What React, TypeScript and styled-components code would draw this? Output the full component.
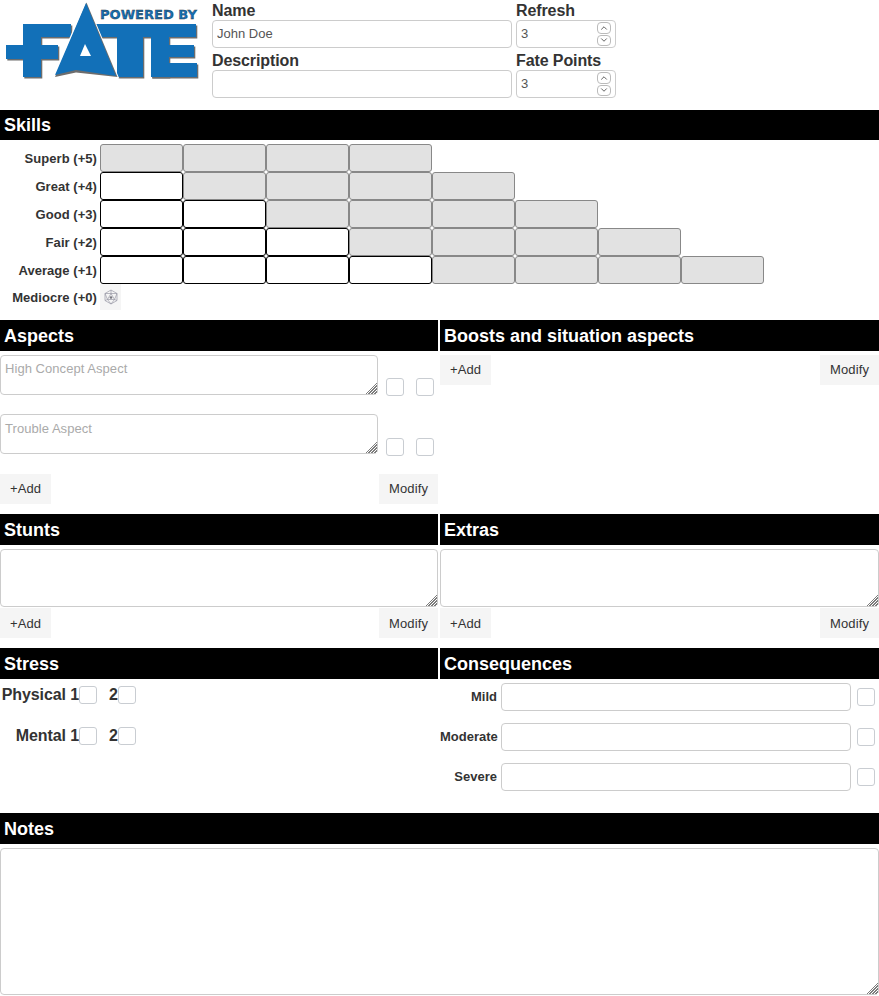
import React from 'react';
import styled, { createGlobalStyle } from 'styled-components';
import { ChevronUp, ChevronDown } from 'lucide-react';

const Global = createGlobalStyle`
  html, body {
    margin: 0;
    padding: 0;
    background: #fff;
  }
  body {
    font-family: "Liberation Sans", Arial, sans-serif;
    color: #333;
  }
  * {
    box-sizing: border-box;
  }
`;

const Page = styled.div`
  width: 879px;
  height: 996px;
  overflow: hidden;
`;

const Top = styled.div`
  display: flex;
  height: 110px;
`;

const LogoBox = styled.div`
  width: 212px;
  flex: none;
`;

const Fields = styled.div`
  display: grid;
  grid-template-columns: 300px 100px;
  column-gap: 4px;
  align-content: start;
`;

const Field = styled.label`
  display: block;
  height: 50px;
  padding-top: 1px;
  font-size: 16px;
  font-weight: bold;
  line-height: 19px;
  letter-spacing: -0.1px;
`;

const TextInput = styled.input`
  display: block;
  width: ${(p: { $w?: number }) => (p.$w ? `${p.$w}px` : '100%')};
  height: 28px;
  padding: 0 4px 2px;
  border: 1px solid #ccc;
  border-radius: 4px;
  background: #fff;
  font: 13px "Liberation Sans", Arial, sans-serif;
  color: #555;
  outline: none;
`;

const NumberBox = styled.div`
  display: flex;
  align-items: center;
  justify-content: space-between;
  height: 28px;
  padding: 0 4px;
  border: 1px solid #ccc;
  border-radius: 4px;
  font-size: 13px;
  font-weight: normal;
  letter-spacing: 0;
  color: #555;
`;

const NumberValue = styled.span`
  padding-bottom: 2px;
`;

const Spin = styled.div`
  display: flex;
  flex-direction: column;
  gap: 1px;
`;

const SpinButton = styled.div`
  display: flex;
  align-items: center;
  justify-content: center;
  width: 14px;
  height: 11.5px;
  border: 1px solid #bbb;
  border-radius: 4px;
  color: #444;
`;

const Header = styled.div<{ $h?: number }>`
  height: ${(p) => p.$h ?? 31}px;
  padding-left: 4px;
  background: #000;
  color: #fff;
  font-size: 18px;
  font-weight: bold;
  line-height: ${(p) => (p.$h ? p.$h : 32)}px;
`;

const Skills = styled.div`
  padding: 4px 0 8px;
`;

const SkillRow = styled.div`
  display: flex;
  height: 28px;
`;

const SkillLabel = styled.div`
  width: 97px;
  margin-right: 3px;
  text-align: right;
  font-size: 13px;
  font-weight: bold;
  line-height: 29px;
  letter-spacing: 0.05px;
`;

const MediocreLabel = styled(SkillLabel)`
  line-height: 27px;
`;

const Cell = styled.div<{ $filled?: boolean }>`
  width: 83px;
  height: 28px;
  border: 1px solid ${(p) => (p.$filled ? '#000' : '#888')};
  border-radius: 3px;
  background: ${(p) => (p.$filled ? '#fff' : '#e2e2e2')};
`;

const DiceButton = styled.div`
  display: flex;
  align-items: center;
  justify-content: center;
  width: 21px;
  height: 26px;
  background: #f5f5f5;
`;

const Columns = styled.div`
  display: grid;
  grid-template-columns: 438px 439px;
  column-gap: 2px;
`;

const AspectBlock = styled.div`
  height: 163px;
  padding-top: 4px;
`;

const Area = styled.textarea<{ $w?: number; $h: number }>`
  display: block;
  flex: none;
  width: ${(p) => (p.$w ? `${p.$w}px` : '100%')};
  height: ${(p) => p.$h}px;
  margin: 0;
  padding: 5px 4px 4px;
  border: 1px solid #ccc;
  border-radius: 4px;
  background: #fff;
  font: 13px "Liberation Sans", Arial, sans-serif;
  color: #555;
  outline: none;

  &::placeholder {
    color: #aaa;
    opacity: 1;
    letter-spacing: 0.05px;
  }

  &::-webkit-resizer {
    background-color: #fff;
    background-image: linear-gradient(135deg, #fff 62%, transparent 62%),
      repeating-linear-gradient(135deg, #7d7d7d 0 1px, #fff 1px 2.12px);
  }
`;

const Checks = styled.div`
  display: flex;
  gap: 12px;
  margin-left: 8px;
  margin-bottom: -1px;
`;

const AspectRow = styled.div`
  display: flex;
  align-items: flex-end;
  margin-bottom: 19px;

  & + & {
    margin-bottom: 20px;
  }

  & + & ${Area} {
    padding-top: 6px;
  }

  & + & ${Checks} {
    margin-bottom: -2px;
  }
`;

const Check = styled.input.attrs({ type: 'checkbox' })`
  appearance: none;
  display: block;
  flex: none;
  width: 18px;
  height: 18px;
  margin: 0;
  border: 1px solid #c9cdd2;
  border-radius: 3px;
  background: #fff;
`;

const Actions = styled.div`
  display: flex;
  justify-content: space-between;
`;

const Button = styled.button`
  height: 30px;
  padding: 0 10px 2px;
  border: 0;
  background: #f5f5f5;
  font: 13px "Liberation Sans", Arial, sans-serif;
  letter-spacing: 0.1px;
  color: #333;
`;

const TextBlock = styled.div`
  height: 103px;
  padding-top: 4px;
`;

const ActionsTight = styled(Actions)`
  margin-top: 1px;

  ${Button} {
    padding-bottom: 0;
  }
`;

const StressBlock = styled.div`
  height: 134px;
  padding-top: 7px;
`;

const StressRow = styled.div`
  display: flex;
  align-items: center;
  height: 18px;
  margin-bottom: 23px;
  font-size: 16px;
  font-weight: bold;
  letter-spacing: -0.1px;
`;

const StressName = styled.div`
  width: 79px;
  text-align: right;
  white-space: nowrap;
`;

const StressTwo = styled.div`
  width: 9px;
  margin-left: 12px;
`;

const ConsequenceBlock = styled.div`
  padding-top: 4px;
`;

const ConsequenceRow = styled.div`
  display: flex;
  align-items: center;
  height: 28px;
  margin-bottom: 12px;
`;

const ConsequenceLabel = styled.div`
  width: 57px;
  margin-right: 4px;
  padding-bottom: 2px;
  text-align: right;
  font-size: 13px;
  font-weight: bold;
`;

const ConsequenceCheck = styled(Check)`
  margin-left: 6px;
`;

const NotesBlock = styled.div`
  padding-top: 4px;
`;

const Bars = () => (
  <>
    <rect x="23" y="24" width="48" height="13" />
    <rect x="23" y="24" width="18" height="53" />
    <rect x="6" y="45" width="52" height="14" />
    <rect x="96" y="24" width="100" height="13" />
    <rect x="117" y="24" width="26" height="53" />
    <rect x="151" y="24" width="18" height="53" />
    <rect x="151" y="45" width="43" height="12" />
    <rect x="151" y="63" width="46" height="14" />
  </>
);

const Logo = () => (
  <svg width="200" height="80" viewBox="0 0 200 80" style={{ display: 'block' }}>
    <g fill="#6d6d6d" transform="translate(1.3 1.5)">
      <Bars />
    </g>
    <g fill="#1270b8">
      <Bars />
    </g>
    <polygon points="86,3 55,76 76,71 117,77" fill="#fff" stroke="#fff" strokeWidth="3" />
    <polygon points="86.5,2.5 55,77 76,72.5 117.5,77" fill="#6d6d6d" />
    <polygon points="86,3 55,75 76,70 116,76" fill="#1270b8" />
    <polygon points="85,44 80,56 91,56" fill="#fff" />
    <text
      x="100"
      y="18.5"
      fontFamily="DejaVu Sans, sans-serif"
      fontSize="12.5"
      fontWeight="bold"
      textLength="97"
      lengthAdjust="spacingAndGlyphs"
      fill="#1270b8"
      stroke="#333"
      strokeWidth="0.35"
    >
      POWERED BY
    </text>
  </svg>
);

const Dice = () => (
  <svg width="16" height="16" viewBox="0 0 16 16" fill="none" stroke="#9a9aa6" strokeWidth="0.7">
    <polygon points="8,1 14,4.5 14,11.5 8,15 2,11.5 2,4.5" />
    <polygon points="8,4.5 11.5,10.5 4.5,10.5" />
    <path d="M8 1v3.5M2 4.5l6 0 6 0M2 11.5l2.5-1M14 11.5l-2.5-1M8 15l-3.5-4.5M8 15l3.5-4.5M2 4.5l2.5 6M14 4.5l-2.5 6" />
    <circle cx="8" cy="8.5" r="1.3" fill="#77777f" stroke="none" />
  </svg>
);

const NumberField = ({ label, value }: { label: string; value: string }) => (
  <Field as="div">
    {label}
    <NumberBox>
      <NumberValue>{value}</NumberValue>
      <Spin>
        <SpinButton>
          <ChevronUp size={10} strokeWidth={2} />
        </SpinButton>
        <SpinButton>
          <ChevronDown size={10} strokeWidth={2} />
        </SpinButton>
      </Spin>
    </NumberBox>
  </Field>
);

const ladder = [
  { label: 'Superb (+5)', filled: 0, total: 4 },
  { label: 'Great (+4)', filled: 1, total: 5 },
  { label: 'Good (+3)', filled: 2, total: 6 },
  { label: 'Fair (+2)', filled: 3, total: 7 },
  { label: 'Average (+1)', filled: 4, total: 8 },
];

const AddModify = () => (
  <Actions>
    <Button>+Add</Button>
    <Button>Modify</Button>
  </Actions>
);

export default function App() {
  return (
    <Page>
      <Global />
      <Top>
        <LogoBox>
          <Logo />
        </LogoBox>
        <Fields>
          <Field>
            Name
            <TextInput defaultValue="John Doe" />
          </Field>
          <NumberField label="Refresh" value="3" />
          <Field>
            Description
            <TextInput />
          </Field>
          <NumberField label="Fate Points" value="3" />
        </Fields>
      </Top>

      <Header $h={30}>Skills</Header>
      <Skills>
        {ladder.map((row) => (
          <SkillRow key={row.label}>
            <SkillLabel>{row.label}</SkillLabel>
            {Array.from({ length: row.total }).map((_, i) => (
              <Cell key={i} $filled={i < row.filled} />
            ))}
          </SkillRow>
        ))}
        <SkillRow>
          <MediocreLabel>Mediocre (+0)</MediocreLabel>
          <DiceButton>
            <Dice />
          </DiceButton>
        </SkillRow>
      </Skills>

      <Columns>
        <div>
          <Header>Aspects</Header>
          <AspectBlock>
            <AspectRow>
              <Area $w={378} $h={40} placeholder="High Concept Aspect" />
              <Checks>
                <Check />
                <Check />
              </Checks>
            </AspectRow>
            <AspectRow>
              <Area $w={378} $h={40} placeholder="Trouble Aspect" />
              <Checks>
                <Check />
                <Check />
              </Checks>
            </AspectRow>
            <AddModify />
          </AspectBlock>
        </div>
        <div>
          <Header>Boosts and situation aspects</Header>
          <AspectBlock>
            <AddModify />
          </AspectBlock>
        </div>
        <div>
          <Header>Stunts</Header>
          <TextBlock>
            <Area $h={58} />
            <ActionsTight>
              <Button>+Add</Button>
              <Button>Modify</Button>
            </ActionsTight>
          </TextBlock>
        </div>
        <div>
          <Header>Extras</Header>
          <TextBlock>
            <Area $h={58} />
            <ActionsTight>
              <Button>+Add</Button>
              <Button>Modify</Button>
            </ActionsTight>
          </TextBlock>
        </div>
        <div>
          <Header>Stress</Header>
          <StressBlock>
            <StressRow>
              <StressName>Physical 1</StressName>
              <Check />
              <StressTwo>2</StressTwo>
              <Check />
            </StressRow>
            <StressRow>
              <StressName>Mental 1</StressName>
              <Check />
              <StressTwo>2</StressTwo>
              <Check />
            </StressRow>
          </StressBlock>
        </div>
        <div>
          <Header>Consequences</Header>
          <ConsequenceBlock>
            {['Mild', 'Moderate', 'Severe'].map((name) => (
              <ConsequenceRow key={name}>
                <ConsequenceLabel>{name}</ConsequenceLabel>
                <TextInput $w={350} />
                <ConsequenceCheck />
              </ConsequenceRow>
            ))}
          </ConsequenceBlock>
        </div>
      </Columns>

      <Header>Notes</Header>
      <NotesBlock>
        <Area $h={147} />
      </NotesBlock>
    </Page>
  );
}
